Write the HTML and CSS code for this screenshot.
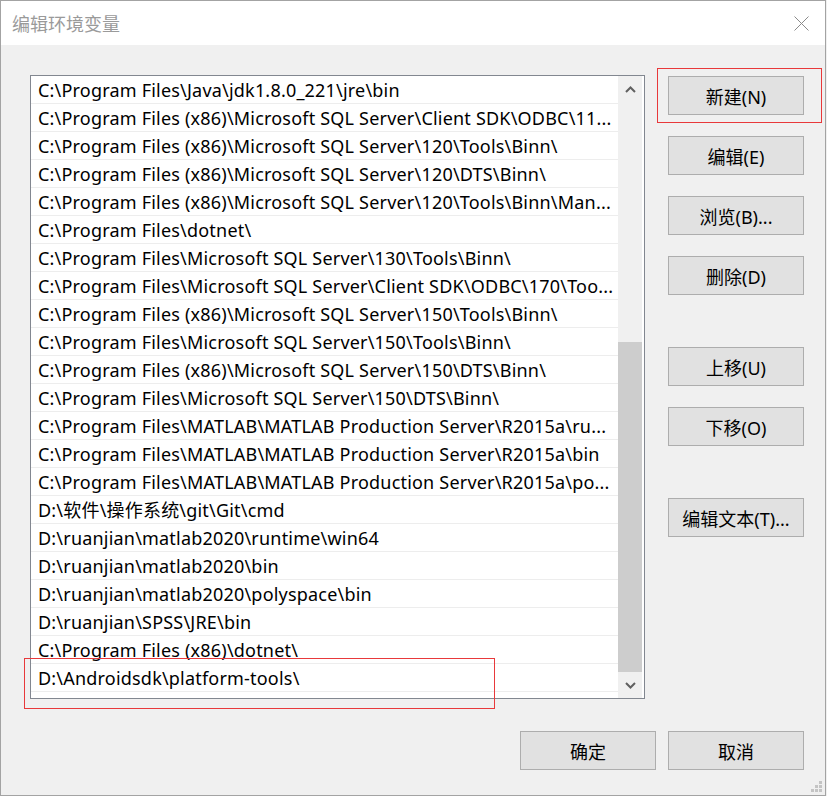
FILE: index.html
```html
<!DOCTYPE html>
<html lang="zh-CN">
<head>
    <meta charset="UTF-8">
    <title>编辑环境变量</title>
    <link rel="stylesheet" href="styles.css">
</head>
<body>
    <div class="window">
        <div class="titlebar">
            <span class="title">编辑环境变量</span>
            <svg class="close" width="15" height="15" viewBox="0 0 15 15">
                <path d="M0.5 0.5 L14.5 14.5 M14.5 0.5 L0.5 14.5" stroke="#8a8a8a" stroke-width="1" fill="none"/>
            </svg>
        </div>
        <div class="content">
            <div class="main">
                <div class="listbox">
                    <ul class="rows">
                        <li>C:\Program Files\Java\jdk1.8.0_221\jre\bin</li>
                        <li>C:\Program Files (x86)\Microsoft SQL Server\Client SDK\ODBC\11...</li>
                        <li>C:\Program Files (x86)\Microsoft SQL Server\120\Tools\Binn\</li>
                        <li>C:\Program Files (x86)\Microsoft SQL Server\120\DTS\Binn\</li>
                        <li>C:\Program Files (x86)\Microsoft SQL Server\120\Tools\Binn\Man...</li>
                        <li>C:\Program Files\dotnet\</li>
                        <li>C:\Program Files\Microsoft SQL Server\130\Tools\Binn\</li>
                        <li>C:\Program Files\Microsoft SQL Server\Client SDK\ODBC\170\Too...</li>
                        <li>C:\Program Files (x86)\Microsoft SQL Server\150\Tools\Binn\</li>
                        <li>C:\Program Files\Microsoft SQL Server\150\Tools\Binn\</li>
                        <li>C:\Program Files (x86)\Microsoft SQL Server\150\DTS\Binn\</li>
                        <li>C:\Program Files\Microsoft SQL Server\150\DTS\Binn\</li>
                        <li>C:\Program Files\MATLAB\MATLAB Production Server\R2015a\ru...</li>
                        <li>C:\Program Files\MATLAB\MATLAB Production Server\R2015a\bin</li>
                        <li>C:\Program Files\MATLAB\MATLAB Production Server\R2015a\po...</li>
                        <li>D:\软件\操作系统\git\Git\cmd</li>
                        <li>D:\ruanjian\matlab2020\runtime\win64</li>
                        <li>D:\ruanjian\matlab2020\bin</li>
                        <li>D:\ruanjian\matlab2020\polyspace\bin</li>
                        <li>D:\ruanjian\SPSS\JRE\bin</li>
                        <li>C:\Program Files (x86)\dotnet\</li>
                        <li>D:\Androidsdk\platform-tools\</li>
                    </ul>
                    <div class="scrollbar">
                        <div class="arrow">
                            <svg width="11" height="7" viewBox="0 0 11 7"><polyline points="1,6 5.5,1.5 10,6" fill="none" stroke="#606060" stroke-width="2"/></svg>
                        </div>
                        <div class="track"><div class="thumb"></div></div>
                        <div class="arrow">
                            <svg width="11" height="7" viewBox="0 0 11 7"><polyline points="1,1 5.5,5.5 10,1" fill="none" stroke="#606060" stroke-width="2"/></svg>
                        </div>
                    </div>
                </div>
                <div class="side">
                    <button class="btn">新建(N)</button>
                    <button class="btn">编辑(E)</button>
                    <button class="btn">浏览(B)...</button>
                    <button class="btn">删除(D)</button>
                    <button class="btn group">上移(U)</button>
                    <button class="btn">下移(O)</button>
                    <button class="btn group">编辑文本(T)...</button>
                </div>
            </div>
            <div class="footer">
                <button class="btn">确定</button>
                <button class="btn">取消</button>
            </div>
        </div>

        <!-- red marks drawn over the screenshot -->
        <div class="mark mark-new"></div>
        <div class="mark mark-path"></div>

        <svg class="grip" width="12" height="12" viewBox="0 0 12 12">
            <rect x="8" y="0" width="3" height="3" fill="#c4c4c4"/>
            <rect x="4" y="4" width="3" height="3" fill="#c4c4c4"/>
            <rect x="8" y="4" width="3" height="3" fill="#c4c4c4"/>
            <rect x="0" y="8" width="3" height="3" fill="#c4c4c4"/>
            <rect x="4" y="8" width="3" height="3" fill="#c4c4c4"/>
            <rect x="8" y="8" width="3" height="3" fill="#c4c4c4"/>
        </svg>
    </div>
</body>
</html>
```

FILE: styles.css
```css
* {
    margin: 0;
    padding: 0;
    box-sizing: border-box;
}
body {
    background: #f0f0f0;
    font-family: "Microsoft YaHei", "Noto Sans", "Noto Sans CJK SC", sans-serif;
    font-size: 18px;
    color: #000;
}
.window {
    position: relative;
    width: 826px;
    height: 796px;
    border: 1px solid #a3a3a3;
    background: #f0f0f0;
    display: flex;
    flex-direction: column;
}
.titlebar {
    height: 44px;
    background: #fff;
    display: flex;
    align-items: center;
    justify-content: space-between;
    padding: 0 16px 0 11px;
}
.title {
    color: #9a9a9a;
    font-family: "Noto Sans CJK SC", sans-serif;
    font-size: 18px;
}
.close {
    margin-top: 1px;
}
.content {
    flex: 1;
    display: flex;
    flex-direction: column;
    padding: 30px 21px 0 29px;
}
.main {
    display: flex;
    gap: 23px;
}
.listbox {
    width: 615px;
    height: 624px;
    border: 1px solid #828790;
    background: #fff;
    display: flex;
    padding-right: 2px;
}
.rows {
    list-style: none;
    width: 587px;
}
.rows li {
    height: 28px;
    padding-top: 2px;
    line-height: 25px;
    border-bottom: 1px solid #ededed;
    padding-left: 7px;
    letter-spacing: 0.2px;
    white-space: nowrap;
    overflow: hidden;
}
.scrollbar {
    width: 24px;
    display: flex;
    flex-direction: column;
    background: #f0f0f0;
}
.arrow {
    height: 26px;
    display: flex;
    align-items: center;
    justify-content: center;
}
.track {
    flex: 1;
    display: flex;
    flex-direction: column;
    padding-top: 240px;
}
.thumb {
    flex: 1;
    background: #cdcdcd;
}
.side {
    display: flex;
    flex-direction: column;
    gap: 21px;
    padding-top: 1px;
}
.btn {
    width: 136px;
    height: 39px;
    border: 1px solid #adadad;
    background: #e1e1e1;
    font-family: "Microsoft YaHei", "Noto Sans", "Noto Sans CJK SC", sans-serif;
    font-size: 18px;
    color: #000;
}
.side .group {
    margin-top: 31px;
}
.footer {
    display: flex;
    justify-content: flex-end;
    gap: 12px;
    margin-top: 32px;
}
.mark {
    position: absolute;
    border: 1px solid #e8393b;
}
.mark-new {
    left: 656px;
    top: 67px;
    width: 165px;
    height: 55px;
}
.mark-path {
    left: 23px;
    top: 657px;
    width: 471px;
    height: 51px;
}
.grip {
    position: absolute;
    right: 2px;
    bottom: 2px;
}
```
